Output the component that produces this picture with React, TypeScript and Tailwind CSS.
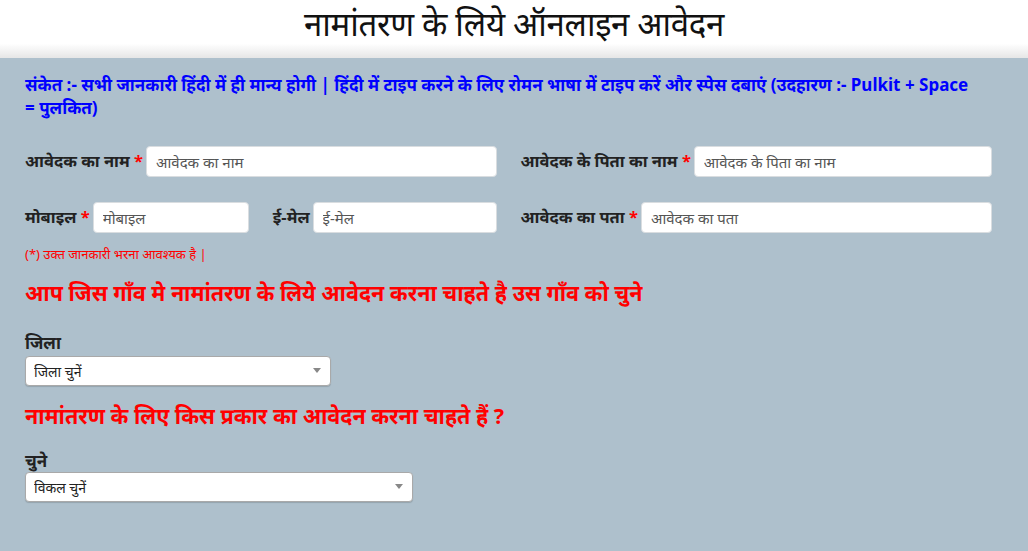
import { useState } from "react";

const font = "font-['Noto_Sans','Liberation_Sans',sans-serif]";

function Field({ label, placeholder, req = true, className = "" }: { label: string; placeholder: string; req?: boolean; className?: string }) {
  return (
    <div className={`flex items-center ${className}`}>
      <label className="shrink-0 text-[16.5px] font-bold text-[#222] pr-[3px] whitespace-nowrap">
        {label}
        {req && <span className="text-[#ff0000]"> *</span>}
      </label>
      <input
        placeholder={placeholder}
        className="flex-1 min-w-0 h-[31px] px-[9px] bg-white border border-[#d9dde0] rounded-[4px] text-[15px] text-[#333] placeholder:text-[#555] focus:outline-none"
      />
    </div>
  );
}

function Select({ value, width }: { value: string; width: string }) {
  const [v, setV] = useState("");
  return (
    <div className={`relative ${width}`}>
      <select
        value={v}
        onChange={(e) => setV(e.target.value)}
        className="appearance-none w-full h-[30px] pl-[8px] pr-6 bg-white border border-[#a9a9a9] rounded-[4px] shadow-[0_1px_1px_rgba(0,0,0,0.15)] text-[14px] text-[#222] focus:outline-none"
      >
        <option value="">{value}</option>
      </select>
      <span className="pointer-events-none absolute right-[10px] top-[12px] w-0 h-0 border-l-[4px] border-r-[4px] border-t-[5px] border-l-transparent border-r-transparent border-t-[#888]" />
    </div>
  );
}

export default function App() {
  return (
    <div className={`min-h-[551px] bg-[#aec0cc] ${font}`}>
      <header className="h-[58px] bg-[linear-gradient(to_bottom,#ffffff_0%,#ffffff_75%,#e6e6e6_100%)] flex items-start justify-center">
        <h1 className="mt-[3px] text-[33px] leading-[42px] text-[#111] tracking-[-0.3px]">
          नामांतरण के लिये ऑनलाइन आवेदन
        </h1>
      </header>

      <main className="px-[25px] pt-[15px] pb-10">
        <p className="text-[17px] leading-[23px] font-bold text-[#0000ff] pr-[25px]">
          संकेत :- सभी जानकारी हिंदी में ही मान्य होगी | हिंदी में टाइप करने के लिए रोमन भाषा में टाइप करें और स्पेस दबाएं (उदहारण :- Pulkit + Space = पुलकित)
        </p>

        <div className="mt-[27px] grid grid-cols-2 gap-x-6 gap-y-[25px] pr-[11px]">
          <Field label="आवेदक का नाम" placeholder="आवेदक का नाम" />
          <Field label="आवेदक के पिता का नाम" placeholder="आवेदक के पिता का नाम" />
          <div className="grid grid-cols-2 gap-x-6">
            <Field label="मोबाइल" placeholder="मोबाइल" />
            <Field label="ई-मेल" placeholder="ई-मेल" req={false} />
          </div>
          <Field label="आवेदक का पता" placeholder="आवेदक का पता" />
        </div>

        <p className="mt-[13px] text-[13px] leading-[16px] text-[#ff0000]">(*) उक्त जानकारी भरना आवश्यक है |</p>

        <h2 className="mt-[16px] text-[21.5px] leading-[30px] font-bold text-[#ff0000]">
          आप जिस गाँव मे नामांतरण के लिये आवेदन करना चाहते है उस गाँव को चुने
        </h2>
        <div className="mt-[22px] text-[17px] leading-[26px] font-bold text-[#222]">जिला</div>
        <Select value="जिला चुनें" width="w-[306px]" />

        <h2 className="mt-[15px] text-[21.5px] leading-[30px] font-bold text-[#ff0000]">
          नामांतरण के लिए किस प्रकार का आवेदन करना चाहते हैं ?
        </h2>
        <div className="mt-[19px] text-[17px] leading-[22px] font-bold text-[#222]">चुने</div>
        <Select value="विकल चुनें" width="w-[388px]" />
      </main>
    </div>
  );
}
